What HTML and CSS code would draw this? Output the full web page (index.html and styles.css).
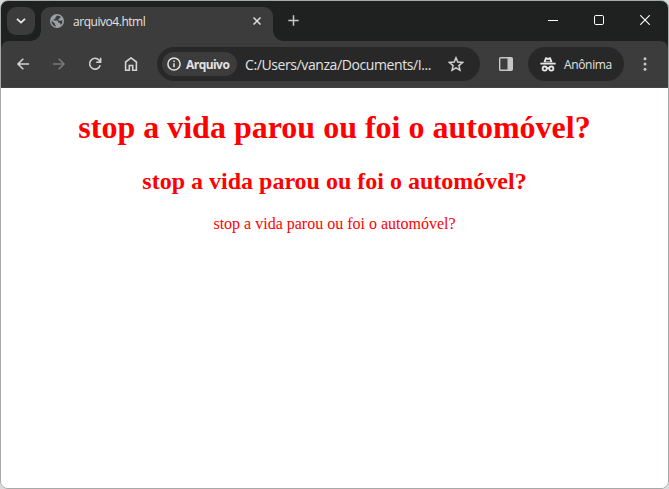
FILE: index.html
```html
<!DOCTYPE html>
<html lang="pt-BR">
<head>
<meta charset="utf-8">
<title>arquivo4.html</title>
<link rel="stylesheet" href="styles.css">
</head>
<body>
<div class="window">
  <header class="tabstrip">
    <button class="tab-search" aria-label="Pesquisar guias"><svg width="10" height="6" viewBox="0 0 10 6"><path d="M1 .8 5 4.6 9 .8" fill="none" stroke="#e8e8e8" stroke-width="1.8"/></svg></button>
    <div class="tab">
      <svg class="globe" width="14" height="14" viewBox="0 0 14 14"><circle cx="7" cy="7" r="7" fill="#9aa0a6"/><path d="M7.2 1.5 5.5 3.2v1.3L3.8 5.3v1.2h3.4l1.1 1.2v1.1h1.5l1 2.1a5.5 5.5 0 0 0 1.5-5l-1.6.9-2-.3-.5-1.4 2.2-1.2V2.3ZM1.6 6.5 5 9.8v1.1l1 .7v.9A5.6 5.6 0 0 1 1.6 6.5Z" fill="#3c3c3c"/></svg>
      <span class="tab-title">arquivo4.html</span>
      <svg class="tab-close" width="8" height="8" viewBox="0 0 8 8"><path d="m.5.5 7 7m0-7-7 7" stroke="#dedede" stroke-width="1.5"/></svg>
    </div>
    <svg class="new-tab" width="11" height="11" viewBox="0 0 11 11"><path d="M5.5.3v10.4M.3 5.5h10.4" stroke="#c7c7c7" stroke-width="1.5"/></svg>
    <div class="controls">
      <svg width="10" height="10" viewBox="0 0 10 10"><path d="M0 5.5h10" stroke="#fff"/></svg>
      <svg width="10" height="10" viewBox="0 0 10 10"><rect x=".5" y=".5" width="9" height="9" rx="1.3" fill="none" stroke="#fff"/></svg>
      <svg width="10" height="10" viewBox="0 0 10 10"><path d="m.2.2 9.6 9.6m0-9.6L.2 9.8" stroke="#fff" stroke-width="1.1"/></svg>
    </div>
  </header>
  <nav class="toolbar">
    <div class="nav-icons">
      <svg width="14" height="14" viewBox="0 0 14 14"><path d="M13 7H2m5.3-5.3L2 7l5.3 5.3" fill="none" stroke="#d2d2d2" stroke-width="1.6"/></svg>
      <svg width="14" height="14" viewBox="0 0 14 14"><path d="M1 7h11M6.7 1.7 12 7l-5.3 5.3" fill="none" stroke="#777" stroke-width="1.6"/></svg>
      <svg width="14" height="14" viewBox="0 0 14 14"><path d="M12.2 8.2a5.4 5.4 0 1 1-1.1-5l1.3 1.5M12.6.8v4.5H8.2" fill="none" stroke="#d2d2d2" stroke-width="1.6"/></svg>
      <svg width="14" height="14" viewBox="0 0 14 14"><path d="M1.6 13.2V5L7 .9 12.4 5v8.2H8.7V8.5H5.3v4.7Z" fill="none" stroke="#d2d2d2" stroke-width="1.6"/></svg>
    </div>
    <div class="omnibox">
      <span class="chip"><svg width="14" height="14" viewBox="0 0 14 14"><circle cx="7" cy="7" r="6.1" fill="none" stroke="#e3e3e3" stroke-width="1.5"/><path d="M7 6.2v4M7 3.5V5" stroke="#e3e3e3" stroke-width="1.5"/></svg><b>Arquivo</b></span>
      <span class="url">C:/Users/vanza/Documents/I...</span>
      <svg class="star" width="16" height="16" viewBox="0 0 16 16"><path d="m8 1.8 1.8 4.3 4.7.4-3.6 3.1 1.1 4.6L8 11.8l-4 2.4 1.1-4.6-3.6-3.1 4.7-.4Z" fill="none" stroke="#d2d2d2" stroke-width="1.5"/></svg>
    </div>
    <svg class="panel" width="14" height="14" viewBox="0 0 14 14"><rect x=".7" y=".7" width="12.6" height="12.6" rx="1" fill="none" stroke="#c7c7c7" stroke-width="1.4"/><path d="M8.5 1H13v12H8.5Z" fill="#c7c7c7"/></svg>
    <div class="profile"><svg width="16" height="15" viewBox="0 0 16 15"><path d="M3.5 5.2 5 .9C5.2.2 5.8 0 6.4.3L8 .9l1.6-.6c.6-.3 1.2-.1 1.4.6l1.5 4.3ZM.3 5.8h15.4v1.7H.3Z" fill="#e8e8e8"/><path d="M5.8 4.6 6.4 2.6l1.6.5 1.6-.5.6 2Z" fill="#282828"/><g fill="none" stroke="#e8e8e8" stroke-width="1.8"><circle cx="4.7" cy="11.6" r="2.1"/><circle cx="11.3" cy="11.6" r="2.1"/><path d="M6.7 11.2q1.3-.8 2.6 0"/></g></svg><span>Anônima</span></div>
    <svg class="more" width="4" height="14" viewBox="0 0 4 14"><g fill="#c7c7c7"><circle cx="2" cy="1.8" r="1.5"/><circle cx="2" cy="7" r="1.5"/><circle cx="2" cy="12.2" r="1.5"/></g></svg>
  </nav>
  <main class="page">
    <h1>stop a vida parou ou foi o automóvel?</h1>
    <h2>stop a vida parou ou foi o automóvel?</h2>
    <p>stop a vida parou ou foi o automóvel?</p>
  </main>
</div>
</body>
</html>
```
FILE: styles.css
```css
* { box-sizing: border-box; }
body { margin: 0; background: #d8dcda; overflow: hidden; }
svg { display: block; flex: none; }
.window {
  display: flex;
  flex-direction: column;
  height: 489px;
  border: 1px solid #a5a9a7;
  border-radius: 8px;
  overflow: hidden;
  background: linear-gradient(#1f2120 80px, #fff 80px);
}
.tabstrip {
  display: flex;
  flex: none;
  height: 40px;
  padding: 6px 18px 0 6px;
}
.tab-search {
  position: relative;
  z-index: 1;
  display: grid;
  place-items: center;
  width: 28px;
  height: 28px;
  padding: 0;
  border: 0;
  border-radius: 9px;
  background: #3c3c3c;
}
.tab {
  position: relative;
  display: flex;
  align-items: center;
  width: 232px;
  height: 34px;
  margin-left: 6px;
  padding: 0 12px 6px 9px;
  border-radius: 9px 9px 0 0;
  background: #3c3c3c;
}
.tab::before, .tab::after {
  content: "";
  position: absolute;
  bottom: 0;
  width: 10px;
  height: 10px;
}
.tab::before { right: 100%; background: radial-gradient(circle at 0 0, #1f2120 9.5px, #3c3c3c 10px); }
.tab::after { left: 100%; background: radial-gradient(circle at 100% 0, #1f2120 9.5px, #3c3c3c 10px); }
.tab-title { margin: 2px 0 0 9px; font: 12px/16px "Open Sans", sans-serif; letter-spacing: -.46px; color: #e3e3e3; white-space: nowrap; }
.tab-close { margin-left: auto; }
.new-tab { margin: 8px 0 0 15px; }
.controls { display: flex; gap: 36px; margin: 8px 0 0 auto; }
.toolbar {
  display: flex;
  flex: none;
  align-items: center;
  height: 47px;
  padding: 0 21px 0 15px;
  background: #3c3c3c;
  border-bottom: 1px solid #444;
  border-radius: 8px 8px 0 0;
  font-family: "Open Sans", sans-serif;
}
.nav-icons { display: flex; gap: 22px; }
.omnibox {
  display: flex;
  align-items: center;
  width: 323px;
  height: 34px;
  margin-left: 19px;
  padding: 0 16px 0 5px;
  border-radius: 17px;
  background: #282828;
}
.chip {
  display: flex;
  align-items: center;
  gap: 5px;
  width: 75px;
  height: 24px;
  padding-left: 5px;
  border-radius: 12px;
  background: #3c3c3c;
  font-size: 12px;
  letter-spacing: -.55px;
  color: #e3e3e3;
}
.url { margin-left: 8px; font-size: 14px; letter-spacing: -.4px; color: #e3e3e3; white-space: nowrap; }
.star { margin-left: auto; }
.panel { margin-left: 19px; }
.profile {
  display: flex;
  align-items: center;
  gap: 8px;
  width: 96px;
  height: 34px;
  margin-left: 15px;
  padding-left: 12px;
  border-radius: 17px;
  background: #282828;
  font-size: 12px;
  letter-spacing: -.35px;
  color: #e3e3e3;
}
.more { margin-left: auto; }
.page { flex: 1; padding: 21px 8px; background: #fff; color: #f00; text-align: center; font: 16px "Liberation Serif", serif; }
.page h1 { margin: 0; font-size: 32px; line-height: 37px; }
.page h2 { margin: 22px 0 20px; font-size: 24px; line-height: 27px; }
.page p { margin: 0; line-height: 18px; }
```
